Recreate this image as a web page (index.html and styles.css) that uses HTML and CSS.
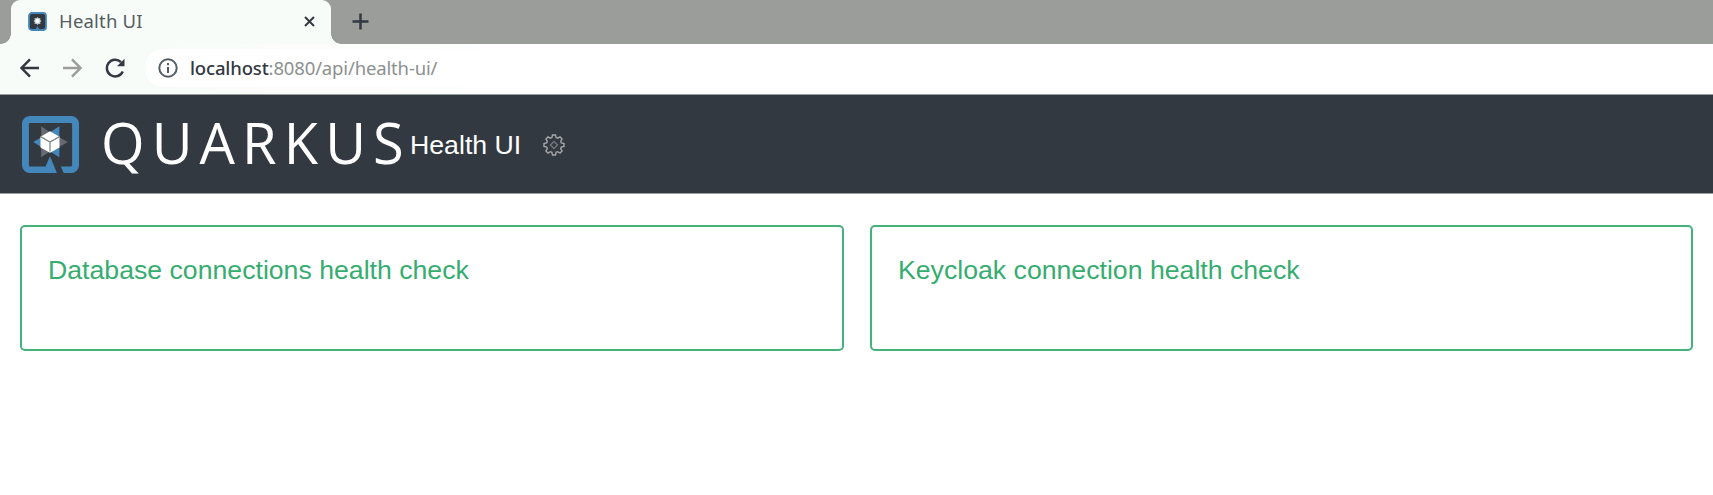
FILE: index.html
```html
<!DOCTYPE html>
<html lang="en">
<head>
<meta charset="utf-8">
<title>Health UI</title>
<link rel="stylesheet" href="styles.css">
</head>
<body>
<div class="tabstrip">
  <div class="tab">
    <svg class="favicon" viewBox="0 0 19 19"><rect x="1" y="1" width="17" height="17" rx="3" fill="#333941" stroke="#4488bb" stroke-width="1.800"/><path d="M9.500 14l2.500 4.500H7z" fill="#4488bb"/><path d="M9.500 5l1 1.300 1.900-.2-.2 1.900L13.500 9l-1.300 1 .2 1.900-1.900-.2-1 1.300-1-1.300-1.900.2.2-1.900L5.500 9l1.300-1-.2-1.900 1.900.2z" fill="#c9d6dc"/><circle cx="9.500" cy="9" r="1.900" fill="#fff"/></svg>
    <span class="tab-title">Health UI</span>
    <svg class="close" viewBox="0 0 11 11"><path d="M1 1l9 9M10 1l-9 9"/></svg>
  </div>
  <svg class="new-tab" viewBox="0 0 17 17"><path d="M8.500 .5v16M.5 8.500h16"/></svg>
</div>
<div class="toolbar">
  <svg class="nav back" viewBox="0 0 20 20"><path d="M19 10H2M10 1.300L1.500 10l8.500 8.700"/></svg>
  <svg class="nav forward" viewBox="0 0 20 20"><path d="M1 10h17M10 1.300l8.500 8.700-8.500 8.700"/></svg>
  <svg class="nav reload" viewBox="0 0 20 20"><path d="M17.800 13.500A8.300 8.300 0 1 1 16 4.200"/><path class="head" d="M19.500 .800v7.500H12z"/></svg>
  <div class="address">
    <svg class="info" viewBox="0 0 20 20"><circle cx="10" cy="10" r="8.700"/><path d="M10 9v6M10 5v2.200"/></svg>
    <span class="url"><span class="host">localhost</span><span class="path">:8080/api/health-ui/</span></span>
  </div>
</div>
<header class="header">
  <svg class="logo" viewBox="0 0 58 58">
    <path d="M42.500 58H50a8 8 0 0 0 8-8V8a8 8 0 0 0-8-8H8a8 8 0 0 0-8 8v42a8 8 0 0 0 8 8h27.500L28.500 41 24 51.500H8.500a1.500 1.500 0 0 1-1.500-1.500V8.500A1.500 1.500 0 0 1 8.500 7h41A1.500 1.500 0 0 1 51 8.500V50a1.500 1.500 0 0 1-1.500 1.500H39.500z" fill="#4488bb"/>
    <path d="M38 10.500v12l-9.500-6zM38 42V30l-9.500 6zM11.500 26.500l8-5v10z" fill="#4488bb"/>
    <path d="M19.500 10.500v12l9-6zM19.500 42V30l9 6zM46.500 26.500l-8.500-5v10z" fill="#676a73"/>
    <path d="M28.500 15.500l9.700 5.500v11l-9.700 5.500-9.700-5.500V21z" fill="#fff"/>
    <path d="M18.800 21l9.700 5.500 9.700-5.500M28.500 26.500V36" fill="none" stroke="#7e8585" stroke-width="1.300"/>
  </svg>
  <span class="brand">QUARKUS</span>
  <span class="product">Health UI</span>
  <svg class="gear" viewBox="0 0 22 22"><path d="M9.500 1h3l.6 2.600 1.500.6L17 2.900 19.100 5l-1.400 2.400.6 1.500 2.700.6v3l-2.700.6-.6 1.500 1.400 2.400-2.100 2.100-2.400-1.400-1.500.6-.6 2.700h-3l-.6-2.700-1.500-.6L5 19.100 2.900 17l1.400-2.400-.6-1.500L1 12.500v-3l2.700-.6.6-1.500L2.900 5 5 2.900l2.400 1.300 1.500-.6z"/><path class="hub" d="M11 7.500l3.500 3.500-3.500 3.500L7.500 11z"/></svg>
</header>
<main class="checks">
  <section class="card">Database connections health check</section>
  <section class="card">Keycloak connection health check</section>
</main>
</body>
</html>
```
FILE: styles.css
```css
* { box-sizing: border-box; }
body { margin: 0; background: #fff; font-family: "Liberation Sans", Arial, sans-serif; }
svg { display: block; flex: none; fill: none; }
.tabstrip { display: flex; align-items: flex-start; height: 44px; padding-left: 11px; background: #9b9d9b; }
.tab { position: relative; display: flex; align-items: center; width: 320px; height: 44px; padding: 0 16px 2px 17px; border-radius: 9px 9px 0 0; background: #f8fcf9; }
.tab::before, .tab::after { content: ""; position: absolute; bottom: 0; width: 10px; height: 10px; }
.tab::before { left: -10px; background: radial-gradient(circle at 0 0, transparent 9.500px, #f8fcf9 10px); }
.tab::after { right: -10px; background: radial-gradient(circle at 100% 0, transparent 9.500px, #f8fcf9 10px); }
.favicon { width: 19px; height: 19px; }
.tab-title { flex: 1; margin-left: 12px; padding-bottom: 2px; font: 18.500px "Noto Sans", sans-serif; letter-spacing: .2px; color: #555b62; white-space: nowrap; }
.close { width: 11px; height: 11px; stroke: #333941; stroke-width: 2; }
.new-tab { width: 17px; height: 17px; margin: 13px 0 0 21px; stroke: #333941; stroke-width: 2.500; }
.toolbar { display: flex; align-items: center; height: 51px; padding: 0 0 3px 20px; border-bottom: 1px solid #9b9d9b; background: linear-gradient(90deg, #f8fcf9 150px, #fdfefd 500px); }
.nav { width: 20px; height: 20px; stroke: #333941; stroke-width: 2.500; }
.forward { margin-left: 22px; stroke: #9b9d9b; }
.reload { margin-left: 23px; }
.head { fill: #333941; stroke: none; }
.address { display: flex; flex: 1; align-items: center; height: 38px; margin-left: 20px; padding-left: 13px; border-radius: 19px 0 0 19px; background: #fff; }
.info { width: 20px; height: 20px; stroke: #555b62; stroke-width: 2; }
.url { margin-left: 12px; padding-bottom: 1px; font: 18.500px "Noto Sans", sans-serif; white-space: nowrap; }
.host { font-weight: 500; letter-spacing: -.15px; color: #333941; }
.path { letter-spacing: -.15px; color: #8c908e; }
.header { display: flex; align-items: center; height: 99px; padding-left: 22px; border-bottom: 1px solid #9b9d9b; background: #333941; color: #fff; }
.logo { width: 57px; height: 57px; }
.brand { width: 309px; margin-left: 22px; padding-bottom: 5px; font: 56px/80px "Open Sans", sans-serif; letter-spacing: 7.100px; white-space: nowrap; }
.product { width: 133px; padding-top: 3px; font-size: 26.700px; white-space: nowrap; }
.gear { width: 22px; height: 22px; margin-top: 2px; stroke: #a5a7aa; stroke-width: 1.400; }
.hub { stroke: #74777f; }
.checks { display: grid; grid-template-columns: 824px 823px; column-gap: 26px; padding: 31px 0 0 20px; }
.card { height: 126px; padding: 28px 26px; border: 2px solid #45b17b; border-radius: 5px; color: #36ad70; font-size: 26.670px; line-height: 31px; white-space: nowrap; }
```
